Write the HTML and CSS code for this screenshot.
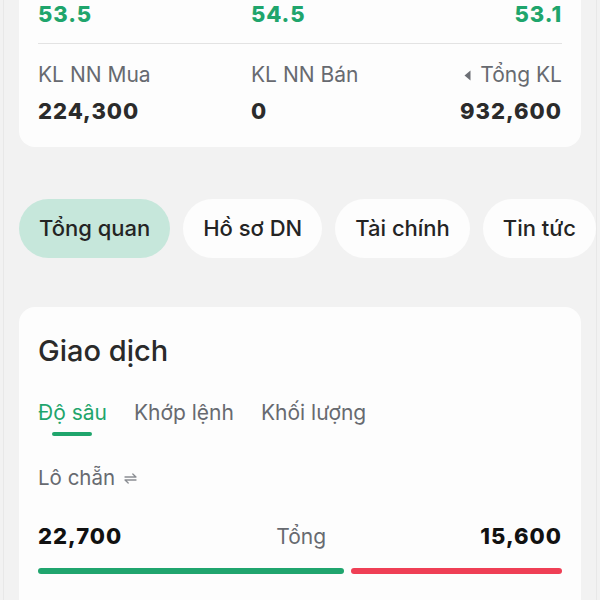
FILE: index.html
```html
<!DOCTYPE html>
<html lang="vi">

<head>
  <meta charset="UTF-8">
  <meta name="viewport" content="width=device-width, initial-scale=1.0">
  <title>Tổng quan</title>
  <link rel="stylesheet" href="styles.css">
</head>

<body>
  <div class="screen">
    <div class="card summary">
      <div class="row prices">
        <div class="up">53.5</div>
        <div class="up">54.5</div>
        <div class="up end">53.1</div>
      </div>
      <div class="divider"></div>
      <div class="row labels">
        <div>KL NN Mua</div>
        <div>KL NN Bán</div>
        <div class="end">
          <svg class="caret" width="7" height="11" viewBox="0 0 7 11"><path d="M6.5 0.5 L0.5 5.5 L6.5 10.5 Z" fill="#6c6f75" /></svg>
          Tổng KL
        </div>
      </div>
      <div class="row volumes">
        <div>224,300</div>
        <div>0</div>
        <div class="end">932,600</div>
      </div>
    </div>

    <div class="pills">
      <div class="pill active">Tổng quan</div>
      <div class="pill">Hồ sơ DN</div>
      <div class="pill">Tài chính</div>
      <div class="pill">Tin tức</div>
    </div>

    <div class="card trade">
      <div class="title">Giao dịch</div>
      <div class="tabs">
        <div class="tab active">Độ sâu</div>
        <div class="tab">Khớp lệnh</div>
        <div class="tab">Khối lượng</div>
      </div>
      <div class="lot">
        Lô chẵn
        <svg class="swap" width="13" height="11" viewBox="0 0 13 11">
          <path d="M1 4 H12 L8.8 1 M12 7 H1 L4.2 10" fill="none" stroke="#8a8d92" stroke-width="1.3" stroke-linecap="round" stroke-linejoin="round" />
        </svg>
      </div>
      <div class="totals">
        <div class="num">22,700</div>
        <div class="mid">Tổng</div>
        <div class="num">15,600</div>
      </div>
      <div class="bars">
        <div class="bar buy" style="flex-grow: 22700"></div>
        <div class="bar sell" style="flex-grow: 15600"></div>
      </div>
    </div>
  </div>
</body>

</html>
```

FILE: styles.css
```css
body,
html {
  width: 100%;
  height: 100%;
  padding: 0;
  margin: 0;
  background: #f2f2f2;
  overflow: hidden;
}

body {
  font-family: Inter, "Noto Sans", sans-serif;
  color: #2a2a2a;
}

.screen {
  margin: 0 3px;
  padding: 0 15px;
  height: 100%;
  border-left: 1px solid #e8e8e8;
  border-right: 1px solid #e8e8e8;
  overflow: hidden;
}

.card {
  background: #fdfdfd;
  border-radius: 16px;
  padding: 0 19px;
}

.summary {
  margin-top: -40px;
  padding-top: 40px;
  padding-bottom: 22px;
}

.row {
  display: grid;
  grid-template-columns: 213px 1fr auto;
}

.row .end {
  text-align: right;
}

.prices {
  font-size: 22px;
  line-height: 28px;
  font-weight: 800;
  letter-spacing: 0.9px;
}

.up {
  color: #1fa56c;
}

.divider {
  height: 1px;
  background: #e3e3e3;
  margin: 15px 0 19px;
}

.labels {
  font-size: 21px;
  line-height: 24px;
  color: #676a70;
}

.labels .end {
  display: flex;
  align-items: center;
  justify-content: flex-end;
  gap: 9px;
}

.volumes {
  margin-top: 10px;
  font-size: 22px;
  line-height: 28px;
  font-weight: 800;
  color: #2b2b2b;
  letter-spacing: 1px;
}

.pills {
  display: flex;
  gap: 13px;
  margin: 52px -16px 49px 0;
  overflow: hidden;
}

.pill {
  flex: none;
  height: 59px;
  line-height: 59px;
  padding: 0 20px;
  border-radius: 30px;
  background: #fdfdfd;
  font-size: 22px;
  font-weight: 500;
  color: #242424;
}

.pill.active {
  background: #c6e7db;
}

.trade {
  padding-top: 28px;
  padding-bottom: 40px;
}

.title {
  font-size: 29px;
  line-height: 32px;
  font-weight: 500;
  color: #2a2a2a;
}

.tabs {
  display: flex;
  gap: 27px;
  margin-top: 34px;
}

.tab {
  font-size: 21px;
  line-height: 24px;
  color: #676a70;
  padding-bottom: 11px;
  position: relative;
}

.tab.active {
  color: #1fa56c;
}

.tab.active::after {
  content: "";
  position: absolute;
  left: 50%;
  bottom: 0;
  width: 40px;
  height: 4px;
  margin-left: -20px;
  border-radius: 2px;
  background: #1fa56c;
}

.lot {
  margin-top: 30px;
  font-size: 20.5px;
  line-height: 24px;
  color: #676a70;
  display: flex;
  align-items: center;
  gap: 9px;
}

.totals {
  display: flex;
  justify-content: space-between;
  align-items: baseline;
  margin-top: 32px;
  line-height: 28px;
}

.totals .num {
  font-size: 22px;
  font-weight: 800;
  color: #111;
  letter-spacing: 1px;
}

.totals .mid {
  font-size: 21px;
  color: #676a70;
}

.bars {
  display: flex;
  gap: 7px;
  margin-top: 17px;
}

.bar {
  height: 6px;
  border-radius: 3px;
  flex-basis: 0;
}

.buy {
  background: #20a56e;
}

.sell {
  background: #ef3f55;
}
```
